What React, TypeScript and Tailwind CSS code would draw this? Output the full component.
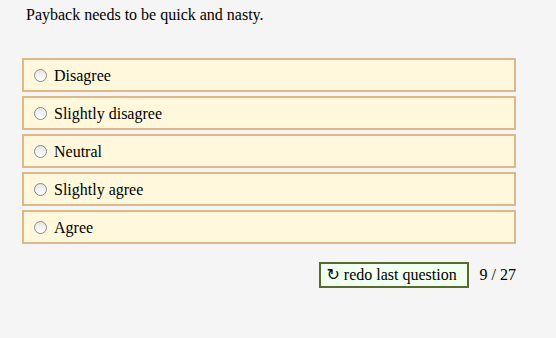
import React from "react";

const options = ["Disagree", "Slightly disagree", "Neutral", "Slightly agree", "Agree"];

export default function App() {
  return (
    <div className="min-h-[338px] w-[556px] bg-[#f5f5f5] pl-[22px] pr-[40px] pt-[6px] text-[16px] text-black font-['Liberation_Serif',serif]">
      <p className="pl-[4px] leading-[18px]">Payback needs to be quick and nasty.</p>
      <div className="mt-[34px] flex flex-col gap-[4px]">
        {options.map((o) => (
          <label
            key={o}
            className="flex h-[34px] items-center gap-[7px] border-2 border-[#deb887] bg-[#fff8dc] pl-[10px] pt-[1px] leading-[18px]"
          >
            <span className="block h-[13px] w-[13px] rounded-full border border-[#8a8a8a] bg-gradient-to-b from-[#e6e6e6] to-white" />
            <span>{o}</span>
          </label>
        ))}
      </div>
      <div className="mt-[18px] flex items-center justify-end gap-[11px]">
        <button className="flex h-[26px] w-[150px] items-center justify-center gap-[4px] border-2 border-[#556b2f] bg-[#f0fff0] pr-[4px] leading-[18px] text-black">
          <span className="font-['DejaVu_Sans',sans-serif] text-[16px]">↻</span>
          <span>redo last question</span>
        </button>
        <span className="leading-[18px]">9 / 27</span>
      </div>
    </div>
  );
}
